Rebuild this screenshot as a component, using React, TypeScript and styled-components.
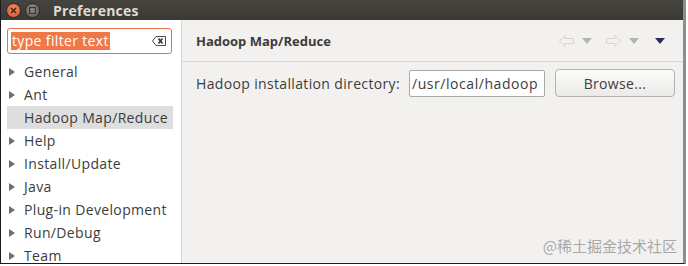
import React from 'react';
import styled, { createGlobalStyle } from 'styled-components';

const Global = createGlobalStyle`
  html, body { margin: 0; padding: 0; background: #ffffff; }
  body { font-family: "Open Sans", "Noto Sans", sans-serif; }
`;

const Window = styled.div`
  width: 682px;
  height: 263px;
  border-left: 1px solid #1c1c1c;
  border-right: 3px solid #8e8e8e;
  border-bottom: 1px solid #1c1c1c;
  display: flex;
  flex-direction: column;
  overflow: hidden;
`;

const TitleBar = styled.div`
  height: 20px;
  flex: none;
  background: linear-gradient(#45443f, #3a3935);
  display: flex;
  align-items: center;
  padding-left: 5px;
  gap: 4px;
`;

const Circle = styled.div<{ $close?: boolean }>`
  width: 15px;
  height: 15px;
  border-radius: 50%;
  display: flex;
  align-items: center;
  justify-content: center;
  background: ${p => (p.$close ? 'radial-gradient(circle at 50% 35%, #f68a5f, #e0542a)' : 'radial-gradient(circle at 50% 35%, #8a8985, #5d5c58)')};
  border: 1px solid #2c2b28;
  box-sizing: border-box;
`;

const Title = styled.span`
  color: #dfdbd2;
  font-weight: bold;
  font-size: 14px;
  margin-left: 9px;
  letter-spacing: 0.2px;
`;

const Body = styled.div`
  flex: 1;
  display: flex;
  min-height: 0;
  letter-spacing: 0.35px;
`;

const Sidebar = styled.div`
  width: 181px;
  flex: none;
  background: #ffffff;
  border-right: 1px solid #d8d7d3;
  padding: 8px 0 0 6px;
  box-sizing: border-box;
`;

const Filter = styled.div`
  width: 165px;
  height: 26px;
  box-sizing: border-box;
  border: 1px solid #e9714a;
  border-radius: 3px;
  display: flex;
  align-items: center;
  padding: 0 5px 0 3px;
  background: #fff;
`;

const Selected = styled.span`
  background: #f07746;
  color: #ffffff;
  font-size: 14px;
  line-height: 18px;
  padding: 0 1px;
`;

const ClearIcon = styled.svg`
  margin-left: auto;
`;

const Tree = styled.ul`
  list-style: none;
  margin: 6px 0 0 0;
  padding: 0;
`;

const Item = styled.li<{ $active?: boolean }>`
  height: 23px;
  width: 166px;
  display: flex;
  align-items: center;
  font-size: 14px;
  color: #3c3c3c;
  background: ${p => (p.$active ? '#dedede' : 'transparent')};
`;

const Arrow = styled.span`
  width: 17px;
  flex: none;
  display: flex;
  justify-content: flex-start;
  padding-left: 2px;
  box-sizing: border-box;
`;

const Main = styled.div`
  flex: 1;
  background: #f2f1f0;
  display: flex;
  flex-direction: column;
  position: relative;
`;

const Header = styled.div`
  height: 42px;
  box-sizing: border-box;
  border-bottom: 1px solid #d8d7d3;
  display: flex;
  align-items: center;
  padding: 0 18px 0 14px;
`;

const HeaderTitle = styled.span`
  font-weight: bold;
  font-size: 13px;
  color: #3c3c3c;
  letter-spacing: 0;
`;

const Tools = styled.div`
  margin-left: auto;
  display: flex;
  align-items: center;
  gap: 8px;
`;

const Row = styled.div`
  display: flex;
  align-items: center;
  padding: 7px 0 0 14px;
`;

const Label = styled.span`
  font-size: 14px;
  color: #3c3c3c;
`;

const TextInput = styled.div`
  margin-left: 9px;
  width: 136px;
  height: 27px;
  box-sizing: border-box;
  background: #fff;
  border: 1px solid #a9a9a7;
  border-radius: 2px;
  font-size: 14px;
  letter-spacing: 0.55px;
  color: #3c3c3c;
  display: flex;
  align-items: center;
  padding-left: 2px;
  white-space: nowrap;
  overflow: hidden;
`;

const Button = styled.div`
  margin-left: 10px;
  width: 120px;
  height: 28px;
  box-sizing: border-box;
  border: 1px solid #b3b2ae;
  border-radius: 4px;
  background: linear-gradient(#fbfbfa, #ebeae8);
  font-size: 14px;
  color: #3c3c3c;
  display: flex;
  align-items: center;
  justify-content: center;
`;

const Watermark = styled.div`
  position: absolute;
  right: 6px;
  bottom: 7px;
  font-family: "Noto Sans CJK SC", sans-serif;
  font-size: 15px;
  letter-spacing: 0;
  color: #a8a8a8;
`;

const Triangle = () => (
  <svg width="6" height="8" viewBox="0 0 6 8">
    <path d="M0 0 L6 4 L0 8 Z" fill="#6e6e6e" />
  </svg>
);

const Drop = ({ color }: { color: string }) => (
  <svg width="10" height="6" viewBox="0 0 10 6">
    <path d="M0 0 H10 L5 6 Z" fill={color} />
  </svg>
);

const items = ['General', 'Ant', 'Hadoop Map/Reduce', 'Help', 'Install/Update', 'Java', 'Plug-in Development', 'Run/Debug', 'Team'];

export default function App() {
  return (
    <>
      <Global />
      <Window>
        <TitleBar>
          <Circle $close>
            <svg width="7" height="7" viewBox="0 0 7 7">
              <path d="M1 1 L6 6 M6 1 L1 6" stroke="#3a2a20" strokeWidth="1.6" />
            </svg>
          </Circle>
          <Circle>
            <svg width="7" height="7" viewBox="0 0 7 7">
              <rect x="0.5" y="0.5" width="6" height="6" fill="none" stroke="#3a3935" strokeWidth="1.2" />
            </svg>
          </Circle>
          <Title>Preferences</Title>
        </TitleBar>
        <Body>
          <Sidebar>
            <Filter>
              <Selected>type filter text</Selected>
              <ClearIcon width="14" height="10" viewBox="0 0 14 10">
                <path d="M4 0.5 H13.5 V9.5 H4 L0.5 5 Z" fill="none" stroke="#4a4a4a" strokeWidth="1" />
                <path d="M6.5 2.5 L10.5 7.5 M10.5 2.5 L6.5 7.5" stroke="#3a3a3a" strokeWidth="1.8" />
              </ClearIcon>
            </Filter>
            <Tree>
              {items.map(name => (
                <Item key={name} $active={name === 'Hadoop Map/Reduce'}>
                  <Arrow>{name !== 'Hadoop Map/Reduce' && <Triangle />}</Arrow>
                  {name}
                </Item>
              ))}
            </Tree>
          </Sidebar>
          <Main>
            <Header>
              <HeaderTitle>Hadoop Map/Reduce</HeaderTitle>
              <Tools>
                <svg width="15" height="12" viewBox="0 0 15 12">
                  <path d="M0.5 6 L6 0.5 V3.5 H14.5 V8.5 H6 V11.5 Z" fill="none" stroke="#d4d3cf" />
                </svg>
                <Drop color="#b5b4b0" />
                <svg width="15" height="12" viewBox="0 0 15 12" style={{ marginLeft: 6 }}>
                  <path d="M14.5 6 L9 0.5 V3.5 H0.5 V8.5 H9 V11.5 Z" fill="none" stroke="#d4d3cf" />
                </svg>
                <Drop color="#b5b4b0" />
                <span style={{ marginLeft: 8, display: 'flex' }}>
                  <Drop color="#2d2a5c" />
                </span>
              </Tools>
            </Header>
            <Row>
              <Label>Hadoop installation directory:</Label>
              <TextInput>/usr/local/hadoop</TextInput>
              <Button>Browse...</Button>
            </Row>
            <Watermark>@稀土掘金技术社区</Watermark>
          </Main>
        </Body>
      </Window>
    </>
  );
}
